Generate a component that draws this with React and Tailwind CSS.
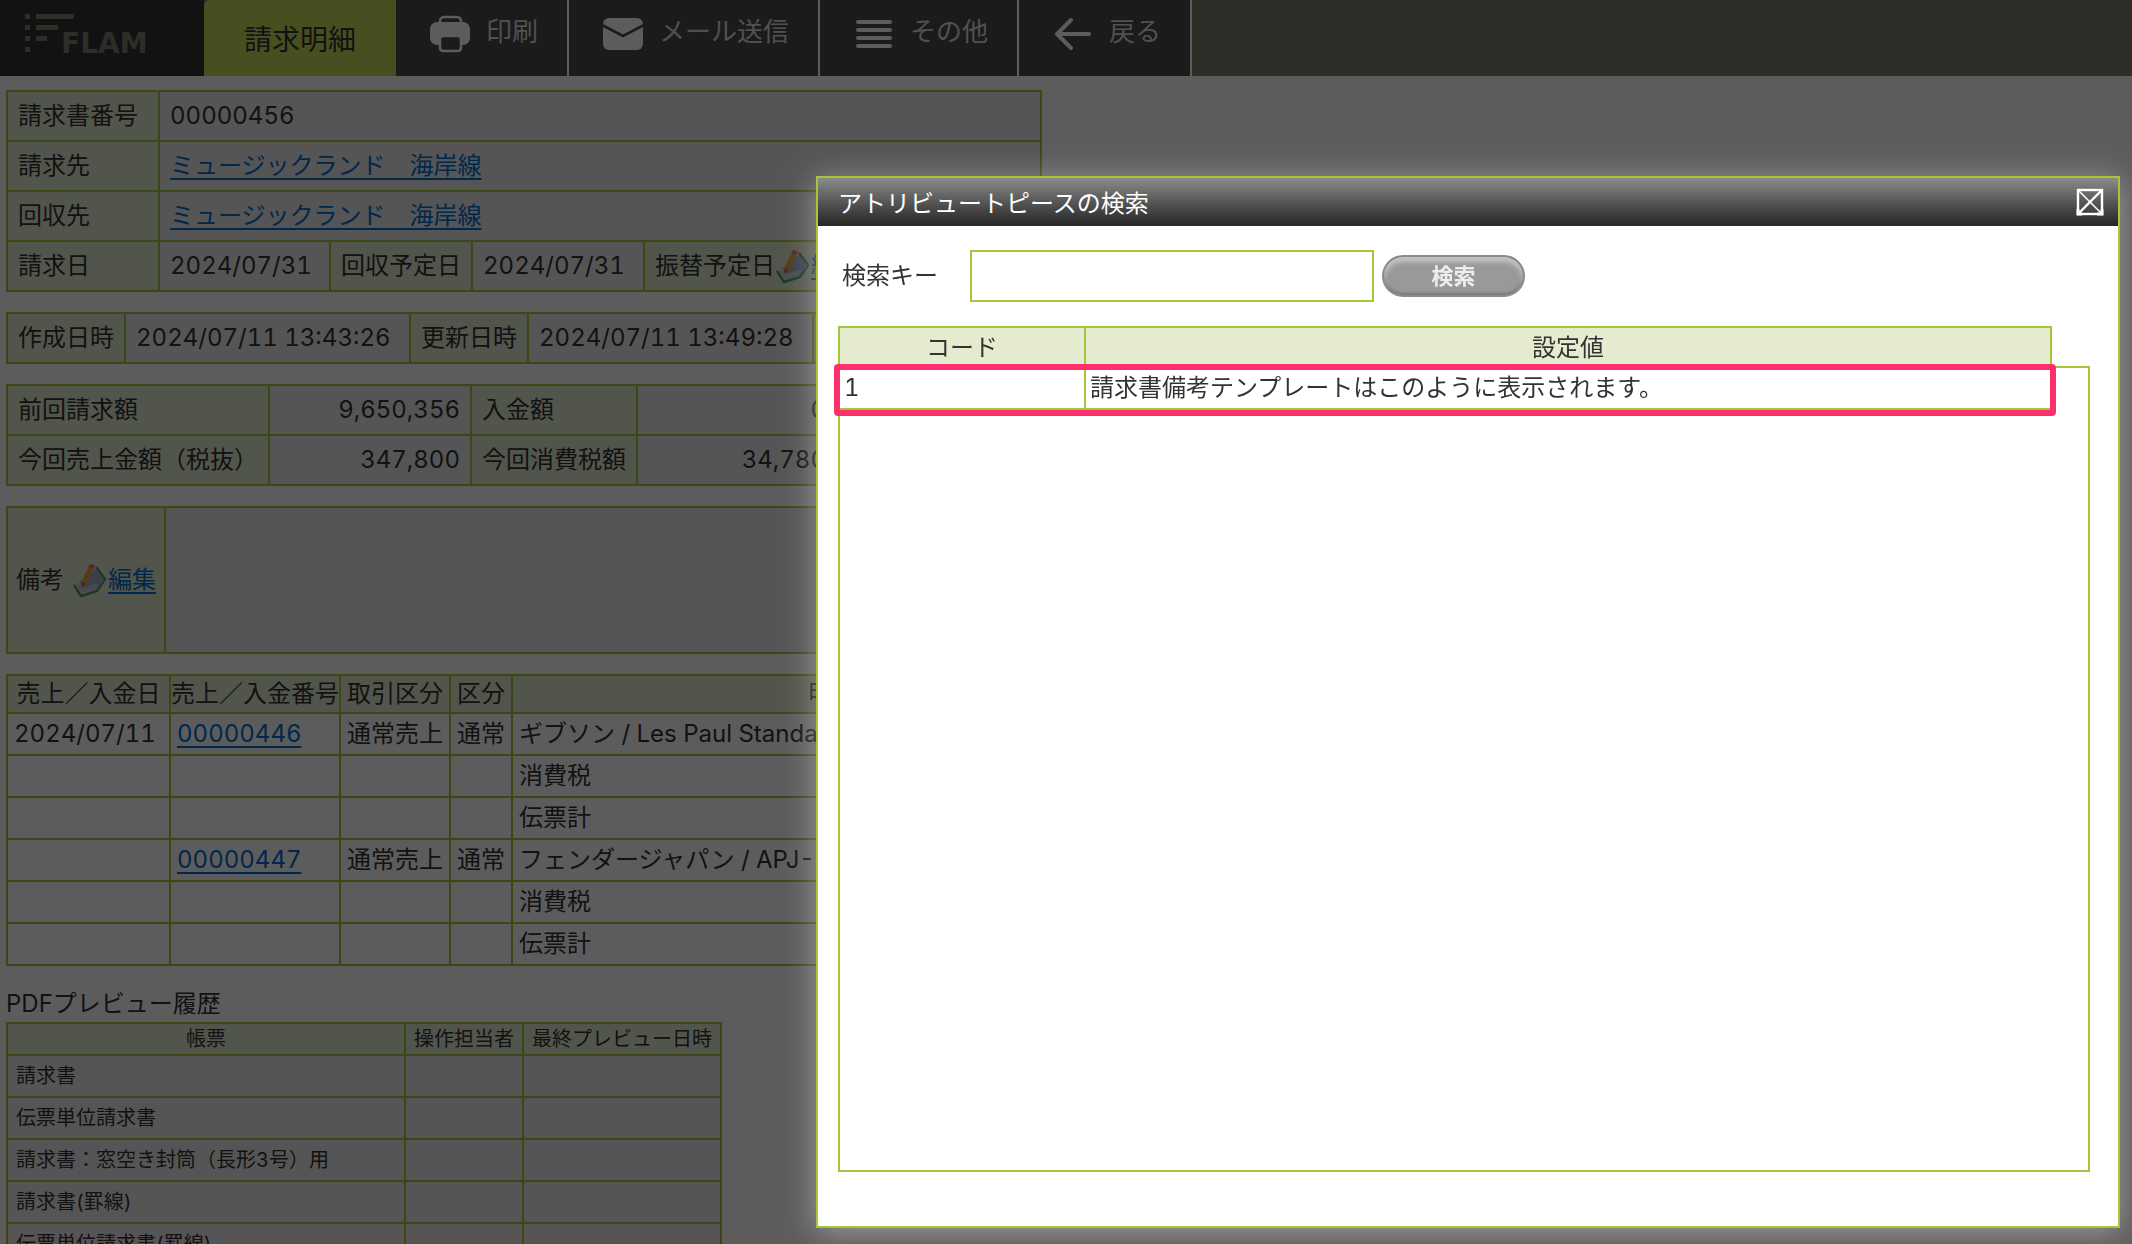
import { useState } from 'react';

const th = 'border-2 border-[#a4c639] bg-[#e4ebcf] font-normal whitespace-nowrap';
const td = 'border-2 border-[#a4c639] whitespace-nowrap';
const link = 'text-[#006ed2] underline decoration-2 underline-offset-4';

const details = [
  { date: '2024/07/11', no: '00000446', kind: '通常売上', type: '通常', name: 'ギブソン / Les Paul Standard' },
  { name: '消費税' },
  { name: '伝票計' },
  { no: '00000447', kind: '通常売上', type: '通常', name: 'フェンダージャパン / APJ-Bass' },
  { name: '消費税' },
  { name: '伝票計' },
];

const reports = [
  '請求書',
  '伝票単位請求書',
  '請求書：窓空き封筒（長形3号）用',
  '請求書(罫線)',
  '伝票単位請求書(罫線)',
];

function Logo() {
  return (
    <div className="relative flex h-full w-[204px] shrink-0 bg-[#333]">
      <svg className="ml-6 mt-3.5 h-10 w-[50px]" viewBox="0 0 50 40" fill="#807c70" aria-hidden="true">
        <path d="M1 0h5v5H1zM12 0h38v5H12zM1 11h5v5H1zM12 11h22v5H12zM1 22h5v5H1zM12 22h11v5H12zM1 33h5v5H1z" />
      </svg>
      <span className="absolute top-7 left-[61px] font-['DejaVu_Sans'] text-[28px] leading-8 font-bold text-[#807c70]">
        FLAM
      </span>
    </div>
  );
}

function PrintIcon() {
  return (
    <svg className="size-10" viewBox="0 0 40 40" aria-hidden="true">
      <path d="M10 10V7a4 4 0 0 1 4-4h13a4 4 0 0 1 4 4v3" fill="none" stroke="#fff" strokeWidth="2.6" />
      <rect x="0" y="8" width="40" height="23" rx="7" fill="#fff" />
      <rect x="10" y="22" width="21" height="15" rx="3" fill="#4b4b4b" stroke="#fff" strokeWidth="2.6" />
    </svg>
  );
}

function MailIcon() {
  return (
    <svg className="size-10" viewBox="0 0 40 40" aria-hidden="true">
      <rect x="0" y="4" width="40" height="32" rx="6" fill="#fff" />
      <path d="M-1 11l21 11 21-11" fill="none" stroke="#4b4b4b" strokeWidth="2.6" />
    </svg>
  );
}

function MenuIcon() {
  return (
    <svg className="size-10" viewBox="0 0 40 40" stroke="#fff" strokeWidth="4" strokeLinecap="round" aria-hidden="true">
      <path d="M4 8h32M4 16h32M4 24h32M4 32h32" />
    </svg>
  );
}

function BackIcon() {
  return (
    <svg className="size-10" viewBox="0 0 40 40" fill="none" stroke="#fff" strokeWidth="4" strokeLinecap="round" strokeLinejoin="round" aria-hidden="true">
      <path d="M36 20H4M18 6L4 20l14 14" />
    </svg>
  );
}

function EditIcon() {
  return (
    <svg className="inline-block size-9 shrink-0" viewBox="0 0 36 36" aria-hidden="true">
      <path d="M24 5l9 12-8 12-16 5-7-11" fill="#dfeae4" stroke="#4f9a68" strokeWidth="2.4" strokeLinejoin="round" />
      <path d="M15 13l9-6 8 11-7 9-15 4-5-8z" fill="#9fb2cc" />
      <path d="M5 22l4-1 3 5 14-5-2 6-14 4z" fill="#c3d0e2" />
      <path d="M18 2l5 1.5-8 18-6 4 1-7z" fill="#eda63a" />
      <path d="M18 2l5 1.5-1.500 3.500-5-1.500z" fill="#d97b5e" />
      <path d="M10 20l4 2-5 4z" fill="#c9685a" />
    </svg>
  );
}

function MenuTab({ icon, label }) {
  return (
    <button type="button" className="flex h-full shrink-0 items-start border-r-2 border-white bg-[#4b4b4b] pl-[34px] pr-[29px]">
      <span className="mt-3.5">{icon}</span>
      <span className="ml-4 mt-3 text-[26px] leading-10 text-[#ddd]">{label}</span>
    </button>
  );
}

function Header() {
  return (
    <header className="flex h-[76px] bg-[#807c6c]">
      <Logo />
      <div className="flex h-full w-48 shrink-0 items-center justify-center rounded-tl-md bg-[#c5d956] pt-1 text-[28px]">
        請求明細
      </div>
      <nav className="flex">
        <MenuTab icon={<PrintIcon />} label="印刷" />
        <MenuTab icon={<MailIcon />} label="メール送信" />
        <MenuTab icon={<MenuIcon />} label="その他" />
        <MenuTab icon={<BackIcon />} label="戻る" />
      </nav>
    </header>
  );
}

function InvoiceTable() {
  return (
    <table className="w-[1036px] table-fixed border-collapse bg-[#ebebeb] text-left">
      <colgroup>
        <col className="w-[152px]" />
        <col className="w-[171px]" />
        <col className="w-[142px]" />
        <col className="w-[172px]" />
        <col className="w-[230px]" />
        <col />
      </colgroup>
      <tbody>
        <tr className="h-[50px]">
          <th className={`${th} px-2.5`}>請求書番号</th>
          <td className={`${td} px-2.5`} colSpan={5}>00000456</td>
        </tr>
        <tr className="h-[50px]">
          <th className={`${th} px-2.5`}>請求先</th>
          <td className={`${td} px-2.5`} colSpan={5}><a href="#billing" className={link}>ミュージックランド　海岸線</a></td>
        </tr>
        <tr className="h-[50px]">
          <th className={`${th} px-2.5`}>回収先</th>
          <td className={`${td} px-2.5`} colSpan={5}><a href="#collect" className={link}>ミュージックランド　海岸線</a></td>
        </tr>
        <tr className="h-[50px]">
          <th className={`${th} px-2.5`}>請求日</th>
          <td className={`${td} px-2.5`}>2024/07/31</td>
          <th className={`${th} px-2.5`}>回収予定日</th>
          <td className={`${td} px-2.5`}>2024/07/31</td>
          <th className={`${th} px-2.5`}>
            <span className="flex items-center">
              振替予定日<EditIcon /><a href="#transfer" className={link}>編集</a>
            </span>
          </th>
          <td className={td}></td>
        </tr>
      </tbody>
    </table>
  );
}

function StampTable() {
  return (
    <table className="w-[1036px] table-fixed border-collapse bg-[#ebebeb] text-left">
      <colgroup>
        <col className="w-[118px]" />
        <col className="w-[285px]" />
        <col className="w-[118px]" />
        <col className="w-[285px]" />
        <col />
      </colgroup>
      <tbody>
        <tr className="h-[50px]">
          <th className={`${th} px-2.5`}>作成日時</th>
          <td className={`${td} px-2.5`}>2024/07/11 13:43:26</td>
          <th className={`${th} px-2.5`}>更新日時</th>
          <td className={`${td} px-2.5`}>2024/07/11 13:49:28</td>
          <th className={th}></th>
        </tr>
      </tbody>
    </table>
  );
}

function AmountTable() {
  const rows = [
    ['前回請求額', '9,650,356', '入金額', '0'],
    ['今回売上金額（税抜）', '347,800', '今回消費税額', '34,780'],
  ];
  return (
    <table className="w-[832px] table-fixed border-collapse bg-[#ebebeb] text-left">
      <colgroup>
        <col className="w-[262px]" />
        <col className="w-[202px]" />
        <col className="w-[166px]" />
        <col />
      </colgroup>
      <tbody>
        {rows.map(([a, b, c, d]) => (
          <tr key={a} className="h-[50px]">
            <th className={`${th} px-2.5`}>{a}</th>
            <td className={`${td} px-2.5 text-right`}>{b}</td>
            <th className={`${th} px-2.5`}>{c}</th>
            <td className={`${td} px-2.5 text-right`}>{d}</td>
          </tr>
        ))}
      </tbody>
    </table>
  );
}

function RemarksTable() {
  return (
    <table className="w-[1036px] table-fixed border-collapse bg-[#ebebeb] text-left">
      <colgroup>
        <col className="w-[158px]" />
        <col />
      </colgroup>
      <tbody>
        <tr className="h-[146px]">
          <th className={`${th} px-2`}>
            <span className="flex items-center">
              備考<span className="ml-2 flex items-center"><EditIcon /><a href="#remarks" className={link}>編集</a></span>
            </span>
          </th>
          <td className={td}></td>
        </tr>
      </tbody>
    </table>
  );
}

function DetailTable() {
  return (
    <table className="w-[1148px] table-fixed border-collapse text-left">
      <colgroup>
        <col className="w-[163px]" />
        <col className="w-[170px]" />
        <col className="w-[110px]" />
        <col className="w-[62px]" />
        <col />
      </colgroup>
      <thead>
        <tr className="h-[38px] text-center">
          <th className={th}>売上／入金日</th>
          <th className={th}>売上／入金番号</th>
          <th className={th}>取引区分</th>
          <th className={th}>区分</th>
          <th className={th}>明細</th>
        </tr>
      </thead>
      <tbody>
        {details.map((row, i) => (
          <tr key={i} className="h-[42px]">
            <td className={`${td} px-1.5`}>{row.date}</td>
            <td className={`${td} px-1.5`}>{row.no && <a href={`#${row.no}`} className={link}>{row.no}</a>}</td>
            <td className={`${td} px-1.5`}>{row.kind}</td>
            <td className={`${td} px-1.5`}>{row.type}</td>
            <td className={`${td} px-1.5`}>{row.name}</td>
          </tr>
        ))}
      </tbody>
    </table>
  );
}

function PreviewHistory() {
  return (
    <section>
      <h2 className="leading-9">PDFプレビュー履歴</h2>
      <table className="w-[716px] table-fixed border-collapse bg-[#ebebeb] text-left text-[20px] leading-7">
        <colgroup>
          <col className="w-[398px]" />
          <col className="w-[118px]" />
          <col />
        </colgroup>
        <thead>
          <tr className="h-8 text-center">
            <th className={th}>帳票</th>
            <th className={th}>操作担当者</th>
            <th className={th}>最終プレビュー日時</th>
          </tr>
        </thead>
        <tbody>
          {reports.map((name) => (
            <tr key={name} className="h-[42px]">
              <td className={`${td} px-2`}>{name}</td>
              <td className={td}></td>
              <td className={td}></td>
            </tr>
          ))}
        </tbody>
      </table>
    </section>
  );
}

function SearchDialog() {
  const [keyword, setKeyword] = useState('');

  return (
    <div
      role="dialog"
      aria-labelledby="dialog-title"
      className="fixed top-44 right-3 bottom-4 left-[816px] flex flex-col border-2 border-[#a4c639] bg-white shadow-[0_4px_30px_rgba(255,255,255,0.4)]"
    >
      <div className="flex h-12 shrink-0 items-center justify-between bg-linear-to-b from-[#8c8c8c] to-[#262626] pr-3.5 pl-5">
        <h1 id="dialog-title" className="pt-1 text-white">アトリビュートピースの検索</h1>
        <button type="button" aria-label="閉じる">
          <svg className="size-7" viewBox="0 0 28 28" fill="none" stroke="#fff" aria-hidden="true">
            <rect x="2" y="2" width="24" height="24" strokeWidth="2.4" />
            <path d="M3 25L25 3" strokeWidth="2.4" />
            <path d="M3 3l22 22" strokeWidth="1.6" />
            <path d="M21 26h5v-5M2 21v5h4" strokeWidth="3" />
          </svg>
        </button>
      </div>

      <form className="flex items-center px-6 pt-6" onSubmit={(e) => e.preventDefault()}>
        <label htmlFor="keyword" className="w-32">検索キー</label>
        <input
          id="keyword"
          type="text"
          value={keyword}
          onChange={(e) => setKeyword(e.target.value)}
          className="h-[52px] w-[404px] border-2 border-[#a4c639] px-2 outline-none"
        />
        <button
          type="submit"
          className="ml-2 h-[42px] w-[143px] rounded-full border-2 border-[#8c8c8c] bg-[#999] text-[22px] leading-8 font-bold text-[#eee] shadow-[inset_0_5px_5px_#c4c4c4,inset_0_-2px_3px_#777]"
        >
          検索
        </button>
      </form>

      <div className="mx-5 mt-6 mr-7 mb-[54px] flex min-h-0 flex-1 flex-col">
        <div className="mr-[38px] flex h-10 shrink-0 border-2 border-b-0 border-[#a4c639] bg-[#e4ebcf] text-center leading-10">
          <div className="w-[246px] border-r-2 border-[#a4c639]">コード</div>
          <div className="flex-1">設定値</div>
        </div>
        <div className="relative flex-1 border-2 border-[#a4c639]">
          <div className="mr-9">
            <table className="w-full table-fixed border-separate border-spacing-0 text-left">
              <colgroup>
                <col className="w-[246px]" />
                <col />
              </colgroup>
              <tbody>
                <tr className="h-[42px]">
                  <td className="border-r-2 border-b-2 border-[#a4c639] pl-1">1</td>
                  <td className="border-r-2 border-b-2 border-[#a4c639] pl-1">請求書備考テンプレートはこのように表示されます。</td>
                </tr>
              </tbody>
            </table>
          </div>
          <div className="pointer-events-none absolute -top-1 right-8 -left-1.5 h-[52px] rounded border-6 border-[#ff2f6d]" />
        </div>
      </div>
    </div>
  );
}

export default function App() {
  return (
    <div className="h-screen overflow-hidden bg-white font-['Inter','Noto_Sans_CJK_JP',sans-serif] text-[24px] leading-8 text-[#333] tabular-nums">
      <Header />
      <main className="space-y-5 px-1.5 pt-3.5">
        <InvoiceTable />
        <StampTable />
        <AmountTable />
        <RemarksTable />
        <DetailTable />
        <PreviewHistory />
      </main>
      <div className="fixed inset-0 bg-black/64" />
      <SearchDialog />
    </div>
  );
}
